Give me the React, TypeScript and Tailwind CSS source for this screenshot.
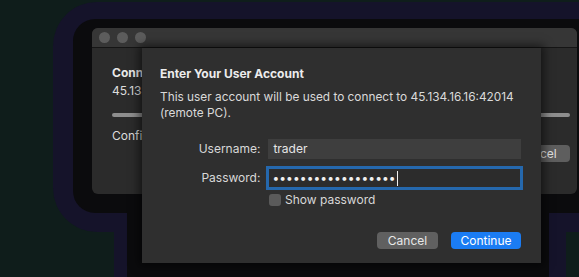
import React from "react";

const font = { fontFamily: "Inter, 'Noto Sans', sans-serif" };

export default function App() {
  return (
    <div
      className="relative w-[579px] h-[277px] overflow-hidden bg-[#0f1d1b] text-[#e4e4e4]"
      style={font}
    >
      {/* shadow halos */}
      <div className="absolute left-[53px] top-[2px] w-[600px] h-[230px] rounded-[44px] bg-[#15132a]" />
      <div className="absolute left-[114px] top-[60px] w-[452px] h-[260px] rounded-[34px] bg-[#15132a]" />
      <div className="absolute left-[73px] top-[19px] w-[560px] h-[194px] rounded-[22px] bg-[#0b0b0d]" />
      <div className="absolute left-[127px] top-[60px] w-[422px] h-[240px] rounded-[18px] bg-[#0b0b0d]" />

      {/* back window */}
      <div className="absolute left-[92px] top-[28px] w-[485px] h-[166px] rounded-[6px] overflow-hidden bg-[#2b2b2b] flex flex-col">
        <div className="h-[20px] bg-[#363636] border-b border-[#151515] flex items-center gap-[7px] pl-[7px]">
          <div className="w-[11px] h-[11px] rounded-full bg-[#5c5c5c]" />
          <div className="w-[11px] h-[11px] rounded-full bg-[#5c5c5c]" />
          <div className="w-[11px] h-[11px] rounded-full bg-[#5c5c5c]" />
        </div>
        <div className="flex flex-col px-[20px] pt-[17px]">
          <div className="text-[12px] leading-[16px] font-bold text-[#e8e8e8]">Connecting</div>
          <div className="mt-[2px] text-[12px] leading-[16px] text-[#dcdcdc]">45.134.16.16:42014</div>
          <div className="mt-[14px] h-[4px] mr-[-13px] rounded-full bg-[#8e8e8e]" />
          <div className="mt-[11px] text-[12px] leading-[16px] text-[#dcdcdc]">Configuring...</div>
          <div className="flex justify-end mr-[-13px] mt-[1px]">
            <div className="h-[17px] w-[66px] rounded-[4px] bg-[#5e5e5e] flex items-center justify-center text-[12px] text-[#e0e0e0]">
              Cancel
            </div>
          </div>
        </div>
      </div>

      {/* sheet */}
      <div className="absolute left-[142px] top-[48px] w-[399px] h-[215px] bg-[#2f2f2f] shadow-[0_0_9px_3px_rgba(0,0,0,0.55)] flex flex-col pl-[18px] pr-[20px] pt-[18px]">
        <div className="text-[12px] leading-[16px] font-bold text-[#ececec]">Enter Your User Account</div>
        <div className="mt-[7px] text-[11.85px] leading-[16px] text-[#dadada]">
          This user account will be used to connect to 45.134.16.16:42014
          <br />
          (remote PC).
        </div>

        <div className="mt-[18px] flex items-center">
          <div className="w-[101px] text-right text-[12px] text-[#d8d8d8]">Username:</div>
          <div className="ml-[8px] w-[254px] h-[20px] bg-[#3e3e3e] flex items-center pl-[5px] text-[12px] text-[#e6e6e6]">
            trader
          </div>
        </div>
        <div className="mt-[9px] flex items-center">
          <div className="w-[101px] text-right text-[12px] text-[#d8d8d8]">Password:</div>
          <div className="ml-[8px] w-[254px] h-[20px] bg-[#2c2c2c] flex items-center pl-[4px] text-[12px] text-[#f0f0f0] shadow-[0_0_0_2px_#2568ad,inset_0_0_0_1px_#2568ad]">
            <span className="tracking-[0.1px]">••••••••••••••••••</span>
            <span className="ml-[1px] w-[1px] h-[15px] bg-[#f0f0f0]" />
          </div>
        </div>
        <div className="mt-[6px] ml-[109px] flex items-center gap-[4px]">
          <div className="w-[12px] h-[12px] rounded-[3px] bg-[#5a5a5a]" />
          <div className="text-[12px] leading-[12px] text-[#d8d8d8]">Show password</div>
        </div>

        <div className="mt-[26px] flex justify-end gap-[13px]">
          <div className="h-[17px] w-[61px] rounded-[4px] bg-[#606060] flex items-center justify-center text-[12px] text-[#e8e8e8]">
            Cancel
          </div>
          <div className="h-[17px] w-[70px] rounded-[4px] bg-[#1b7cf3] flex items-center justify-center text-[12px] text-white">
            Continue
          </div>
        </div>
      </div>
    </div>
  );
}
